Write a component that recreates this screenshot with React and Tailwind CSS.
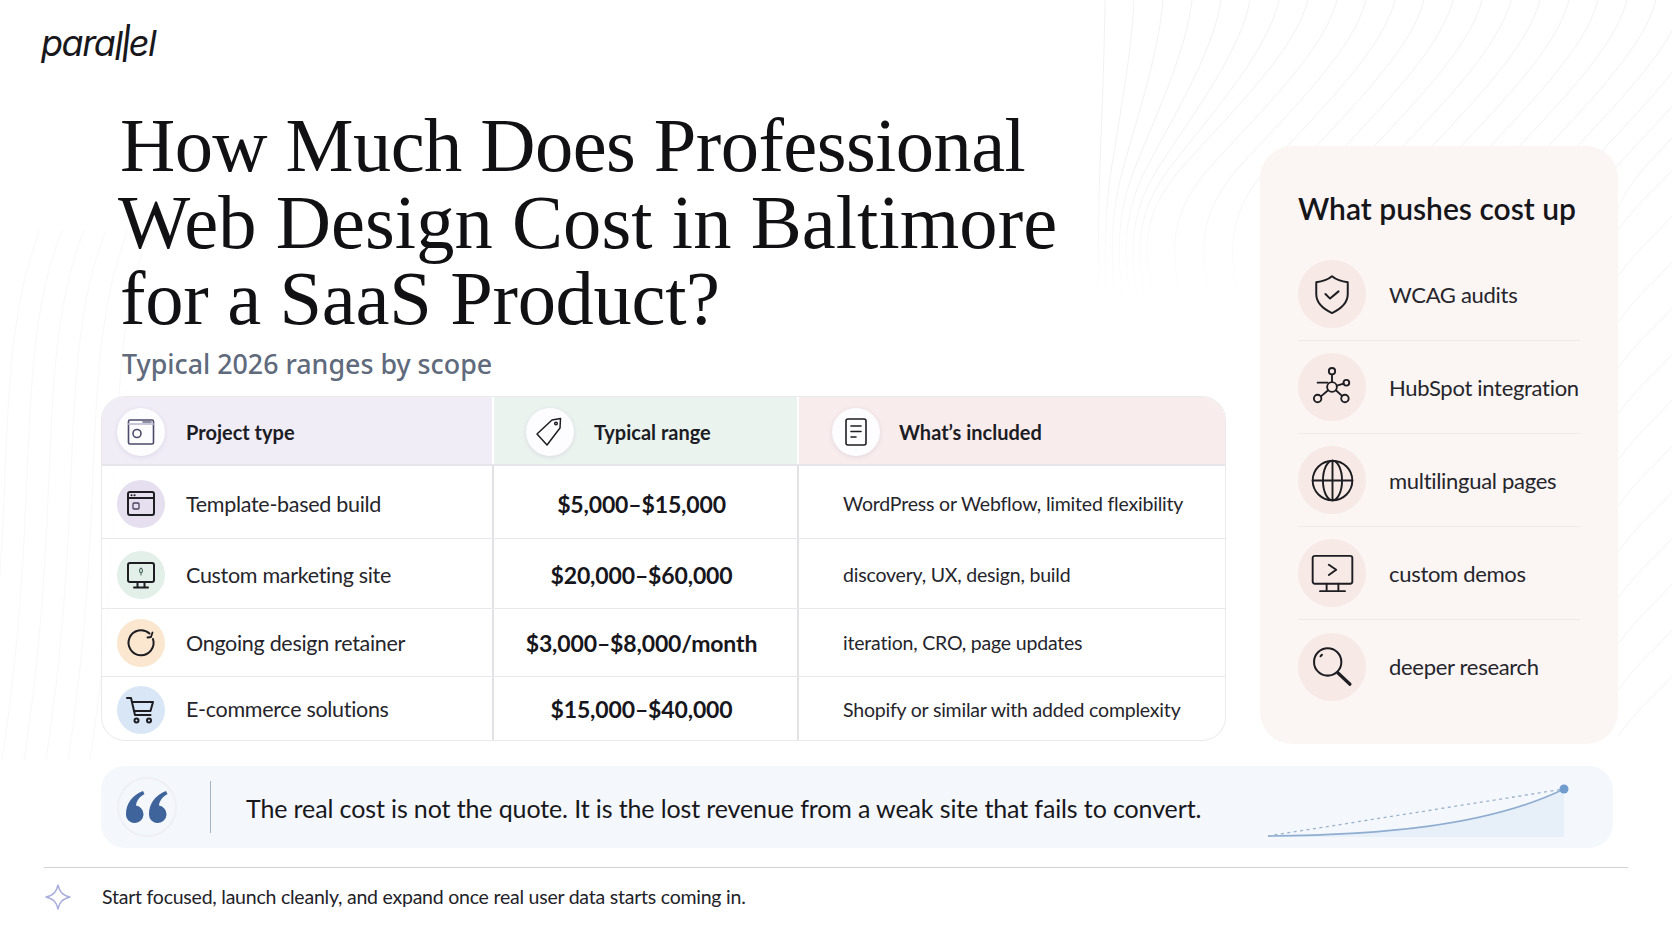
import React from "react";

const sans = "font-['Lato','Noto_Sans',sans-serif]";

function Waves() {
  const top = Array.from({ length: 24 }, (_, i) => {
    const x = 1105 + i * 29;
    const dx = Math.min(125, 5 + i * 17);
    return `M${x} 0C${x - dx * 0.1} 50 ${x - dx * 0.6} 110 ${x - dx} 165S${x - dx * 1.3} 260 ${x - dx * 1.25} 300`;
  });
  const right = Array.from({ length: 12 }, (_, i) => {
    const y = 170 + i * 46;
    return `M1618 ${y + 60}C1640 ${y + 30} 1655 ${y + 20} 1672 ${y}`;
  });
  const left = Array.from({ length: 6 }, (_, i) => {
    const x = i * 22;
    return `M${x + 40} 230C${x - 10} 360 ${x + 20} 500 ${x - 20} 760`;
  });
  return (
    <svg className="absolute inset-0 pointer-events-none" width="1672" height="941" fill="none" stroke="#f3f3f6" strokeWidth="1">
      <defs>
        <linearGradient id="waveFade" gradientUnits="userSpaceOnUse" x1="0" y1="0" x2="0" y2="300">
          <stop offset="0" stopColor="#f1f1f4" />
          <stop offset="0.55" stopColor="#f1f1f4" />
          <stop offset="1" stopColor="#ffffff" />
        </linearGradient>
      </defs>
      {top.map((d) => <path key={d} d={d} stroke="url(#waveFade)" />)}
      {right.map((d) => <path key={d} d={d} />)}
      {left.map((d) => <path key={d} d={d} stroke="#f8f8fa" />)}
    </svg>
  );
}

const I = ({ children, size = 32, sw = 1.8, color = "#1d1d22" }) => (
  <svg width={size} height={size} viewBox="0 0 32 32" fill="none" stroke={color} strokeWidth={sw} strokeLinecap="round" strokeLinejoin="round">
    {children}
  </svg>
);

const WindowOutline = () => (
  <I color="#4c4a6a" sw={1.6}>
    <rect x="3.500" y="4" width="25" height="24" rx="1.500" />
    <path d="M3.500 8h25" stroke="#b9b6cc" />
    <path d="M18 6h8" stroke="#6d6b88" />
    <circle cx="12" cy="17.500" r="4" />
  </I>
);
const Tag = () => (
  <I sw={1.5}>
    <path d="M3 18 18 4l8.500-1.500L26 12 13 29z" />
    <circle cx="22" cy="7.500" r="1.300" />
  </I>
);
const Doc = () => (
  <I sw={1.6}>
    <rect x="6" y="3" width="20" height="26" rx="2" />
    <path d="M11 10h10M11 15.500h10M11 21h5" />
  </I>
);
const Browser = () => (
  <I sw={2}>
    <rect x="3" y="4" width="26" height="23" rx="2" />
    <path d="M3 10h26" />
    <path d="M6.500 7.200h.1M9.500 7.200h.1" />
    <rect x="8" y="15" width="6" height="6" rx="1" strokeWidth="1.300" stroke="#44435c" />
  </I>
);
const Monitor = () => (
  <I sw={2}>
    <rect x="3" y="4" width="26" height="19" rx="2" />
    <path d="M12.500 23v5M19.500 23v5M9 28.500h14" />
    <path d="M16 9c2 1.500 2 4 0 5-2-1-2-3.500 0-5zM16 14v2" strokeWidth="1.100" stroke="#4d6b5d" />
  </I>
);
const Cycle = () => (
  <I sw={2}>
    <path d="M24.500 6.500A12.500 12.500 0 1 0 28 12" />
    <path d="M22.500 10.500l3.500-.5 1.500-4.500" strokeWidth="1.800" />
  </I>
);
const Cart = () => (
  <I sw={2}>
    <path d="M2 4h4l4 17h15.500" />
    <path d="M7 8h21l-2.500 9H9" />
    <circle cx="11.500" cy="26.500" r="2" />
    <circle cx="24" cy="26.500" r="2" />
  </I>
);
const Shield = () => (
  <I size={42} sw={1.500}>
    <path d="M16 2.500c3 2.500 7 4 12 4.500v9c0 6.500-4.500 11-12 14.500C8.500 27 4 22.500 4 16V7c5-.5 9-2 12-4.500z" />
    <path d="m11 16 3.500 3.500L21 14" />
  </I>
);
const Network = () => (
  <I size={46} sw={1.300}>
    <circle cx="16" cy="5" r="2.200" />
    <circle cx="16" cy="16" r="3.400" />
    <circle cx="26" cy="13" r="2" />
    <circle cx="6" cy="24" r="2.600" />
    <circle cx="25" cy="24" r="2.600" />
    <path d="M16 7.500v5M19.400 15l4.700-1.400M13.300 18.300 8.300 22.500M18.700 18.300 23 22.200M6 13h7" />
  </I>
);
const Globe = () => (
  <I size={47} sw={1.300}>
    <circle cx="16" cy="16" r="13.500" />
    <ellipse cx="16" cy="16" rx="6.500" ry="13.500" />
    <path d="M16 2.500v27M2.500 16h27" />
  </I>
);
const Demo = () => (
  <I size={47} sw={1.300}>
    <rect x="2.500" y="4" width="27" height="19" rx="1.500" />
    <path d="M12 23v4.500M20 23v4.500M7.500 28h17" />
    <path d="m13.500 10 5 3.500-5 3.500" />
  </I>
);
const Search = () => (
  <I size={46} sw={1.400}>
    <circle cx="13" cy="12.500" r="9.500" />
    <path d="m20 20 8.500 8" strokeWidth="2.200" />
    <path d="M8 8.500 9 7.500" />
  </I>
);

const HeadIcon = ({ children }) => (
  <div className="w-12 h-12 rounded-full bg-[#fdfcfe] shadow-[0_1px_4px_rgba(120,110,150,0.18)] flex items-center justify-center shrink-0">{children}</div>
);

const rows = [
  { name: "Template-based build", price: "$5,000–$15,000", inc: "WordPress or Webflow, limited flexibility", icon: <Browser />, bg: "bg-[#e5dff0]", h: "h-[73px]", pad: "pt-[4px]" },
  { name: "Custom marketing site", price: "$20,000–$60,000", inc: "discovery, UX, design, build", icon: <Monitor />, bg: "bg-[#e3efe9]", h: "h-[70px]", pad: "pt-[3px]" },
  { name: "Ongoing design retainer", price: "$3,000–$8,000/month", inc: "iteration, CRO, page updates", icon: <Cycle />, bg: "bg-[#fbe6cf]", h: "h-[68px]", pad: "pt-[1px]" },
  { name: "E-commerce solutions", price: "$15,000–$40,000", inc: "Shopify or similar with added complexity", icon: <Cart />, bg: "bg-[#d9e6f5]", h: "h-[63px]", pad: "pt-[2px]" },
];

const pushes = [
  { t: "WCAG audits", i: <Shield /> },
  { t: "HubSpot integration", i: <Network /> },
  { t: "multilingual pages", i: <Globe /> },
  { t: "custom demos", i: <Demo /> },
  { t: "deeper research", i: <Search /> },
];

function Table() {
  return (
    <div className="rounded-[24px] border border-[#eaeaee] overflow-hidden bg-white/80 w-[1125px]">
      <div className="grid grid-cols-[390px_305px_1fr] h-[69px] border-b-2 border-[#e6e6ea]">
        <div className="bg-[#f0edf7] flex items-center pl-[15px] pt-[2px] gap-[21px]">
          <HeadIcon><WindowOutline /></HeadIcon>
          <span className="text-[20px] font-bold text-[#1c1c24]">Project type</span>
        </div>
        <div className="bg-[#ebf3ef] ml-[2px] flex items-center pl-[32px] pt-[2px] gap-[20px]">
          <HeadIcon><Tag /></HeadIcon>
          <span className="text-[20px] font-bold text-[#1c1c24]">Typical range</span>
        </div>
        <div className="bg-[#f9ecec] ml-[2px] flex items-center pl-[33px] pt-[2px] gap-[19px]">
          <HeadIcon><Doc /></HeadIcon>
          <span className="text-[20px] font-bold text-[#1c1c24]">What’s included</span>
        </div>
      </div>
      {rows.map((r, i) => (
        <div key={r.name} className={`grid grid-cols-[390px_305px_1fr] ${r.h} ${i < 3 ? "border-b border-[#e9e9ec]" : ""}`}>
          <div className={`flex items-center pl-[15px] gap-[21px] ${r.pad}`}>
            <div className={`w-12 h-12 rounded-full ${r.bg} flex items-center justify-center shrink-0`}>{r.icon}</div>
            <span className="text-[21.500px] tracking-[-0.3px] text-[#25252b]">{r.name}</span>
          </div>
          <div className={`border-l-2 border-[#e2e2e6] flex items-center justify-center pr-[8px] text-[23px] tracking-[-0.15px] font-bold text-[#16161c] ${r.pad}`}>{r.price}</div>
          <div className={`border-l-2 border-[#e2e2e6] flex items-center pl-[44px] text-[19.500px] tracking-[-0.2px] text-[#25252b] ${r.pad}`}>{r.inc}</div>
        </div>
      ))}
    </div>
  );
}

function Sidebar() {
  return (
    <aside className="w-[358px] h-[598px] rounded-[32px] bg-[#fbf6f4] pl-[38px] pr-[38px] pt-[42px] shrink-0">
      <h2 className="text-[30px] leading-[40px] font-semibold text-[#15151a] whitespace-nowrap">What pushes cost up</h2>
      <div className="mt-[20px]">
        {pushes.map((p, i) => (
          <div key={p.t} className={`flex items-center gap-[23px] h-[93px] ${i < 4 ? "border-b border-[#efe9e7]" : ""}`}>
            <div className="w-[68px] h-[68px] rounded-full bg-[#f6e9e6] flex items-center justify-center shrink-0">{p.i}</div>
            <span className="text-[22px] tracking-[-0.3px] text-[#25252b] whitespace-nowrap">{p.t}</span>
          </div>
        ))}
      </div>
    </aside>
  );
}

export default function App() {
  return (
    <div className={`relative w-[1672px] h-[941px] overflow-hidden bg-white ${sans}`}>
      <Waves />
      <div className="relative">
        <header className="h-[108px] pl-[41px] pt-[21px]">
          <div className="text-[36px] leading-[44px] font-normal italic tracking-[-1.500px] text-[#17171c] font-['Inter',sans-serif]">
            para
            <span className="inline-block scale-y-[1.1] origin-top">l</span>
            <span className="inline-block scale-y-[1.45] origin-center">l</span>
            el
          </div>
        </header>
        <main className="flex items-end pl-[101px] gap-[34px]">
          <div className="pb-[3px]">
            <h1 className="pl-[19px] font-['Liberation_Serif',serif] text-[76.500px] leading-[76.700px] text-[#111114] whitespace-nowrap">
              <span className="block tracking-[-0.570px]">How Much Does Professional</span>
              <span className="block tracking-[0.070px] ml-[-2px]">Web Design Cost in Baltimore</span>
              <span className="block tracking-[-0.300px]">for a SaaS Product?</span>
            </h1>
            <p className="pl-[21px] mt-[7px] font-['Noto_Sans',sans-serif] text-[26.800px] leading-[38px] font-medium text-[#5f6a7d]">Typical 2026 ranges by scope</p>
            <div className="mt-[13px]"><Table /></div>
          </div>
          <Sidebar />
        </main>
        <section className="ml-[101px] mt-[22px] w-[1512px] h-[82px] rounded-[24px] bg-[#f4f7fb] flex items-center pl-[16px] relative">
          <div className="w-[60px] h-[60px] rounded-full border-2 border-[#eef0f5] flex items-center justify-center shrink-0">
            <svg width="42" height="32" viewBox="0 0 42 32" fill="#3f639b">
              <path d="M9 32a8.500 8.500 0 0 1-9-9C0 13 6 4 17 0l1.500 3C13 6 10.500 10 10 14.500A8.800 8.800 0 0 1 9 32z" />
              <path d="M32 32a8.500 8.500 0 0 1-9-9c0-10 6-19 17-23l1.500 3C36 6 33.500 10 33 14.500A8.800 8.800 0 0 1 32 32z" />
            </svg>
          </div>
          <div className="w-[1px] h-[52px] bg-[#a9b2c4] ml-[33px]" />
          <p className="ml-[35px] pt-[3px] text-[25px] tracking-[-0.12px] text-[#17171c] whitespace-nowrap">The real cost is not the quote. It is the lost revenue from a weak site that fails to convert.</p>
          <svg className="absolute left-[1165px] top-[16px]" width="310" height="60" viewBox="0 0 310 60" fill="none">
            <path d="M2 54C110 53 220 45 298 7V55H2z" fill="#e7eff8" />
            <path d="M2 54C110 53 220 45 298 7" stroke="#8fadd0" strokeWidth="1.600" />
            <path d="M2 54 298 7" stroke="#9bb2cd" strokeWidth="1.300" strokeDasharray="3 3.500" />
            <circle cx="298" cy="7" r="4.500" fill="#6f9ccc" />
          </svg>
        </section>
        <div className="ml-[44px] mt-[19px] w-[1584px] h-[1px] bg-[#d3d3d7]" />
        <footer className="flex items-center pl-[44px] mt-[10px] h-[38px]">
          <svg width="28" height="28" viewBox="0 0 28 28" fill="none" stroke="#a9aedb" strokeWidth="1.500" strokeLinejoin="round">
            <path d="M14 2c1.500 6.500 4 10 12 12-8 2-10.500 5.500-12 12-1.500-6.500-4-10-12-12 8-2 10.500-5.500 12-12z" />
          </svg>
          <span className="ml-[30px] text-[19.500px] tracking-[-0.23px] text-[#222228]">Start focused, launch cleanly, and expand once real user data starts coming in.</span>
        </footer>
      </div>
    </div>
  );
}
